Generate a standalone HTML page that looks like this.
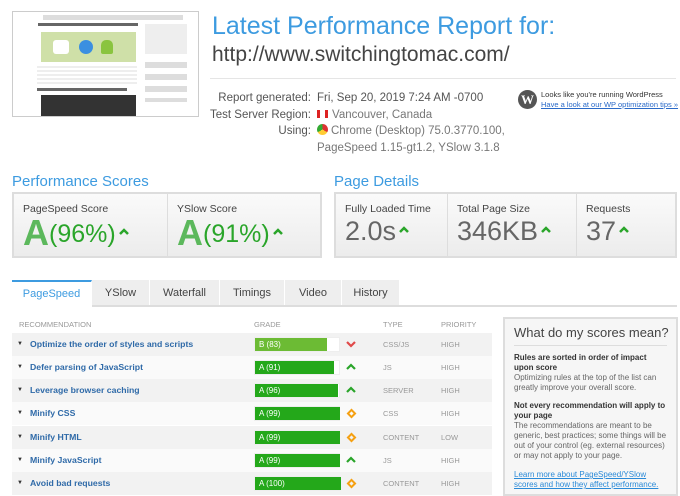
<!DOCTYPE html>
<html><head><style>
*{margin:0;padding:0;box-sizing:border-box}
body{width:680px;height:496px;overflow:hidden;background:#fff;font-family:"Liberation Sans",sans-serif;position:relative;color:#555}
.a{position:absolute}
.blue{color:#3d9be0}
.box{position:absolute;border:2px solid #ddd;background:linear-gradient(#fafafa,#ececec)}
.cell{position:absolute;top:0;bottom:0;border-right:1px solid #ddd}
.lbl{position:absolute;left:9px;top:9px;font-size:10.5px;color:#444}
.big{position:absolute;left:9px;top:22px;font-size:28px;color:#666;white-space:nowrap}
.grn{color:#2aa52a}
.up{display:inline-block;width:10px;height:8px;margin-left:3px;vertical-align:6px}
.tab{position:absolute;top:280px;height:26px;background:#eee;border-right:1px solid #fff;font-size:11px;color:#444;text-align:center;line-height:27px}
.row{position:absolute;left:12px;width:480px;height:23px;font-size:8.7px}
.row .t{position:absolute;left:18px;top:6px;color:#2f6aa8;font-weight:bold}
.row .c{position:absolute;left:5px;top:8px;font-size:6px;color:#333}
.row .bar{position:absolute;left:242px;top:4px;width:86px;height:15px;background:#fff;border:1px solid #eee}
.row .bar div{height:100%;background:#24a81a;color:#fff;font-size:8px;line-height:14px;padding-left:4px}
.row .ty{position:absolute;left:371px;top:7px;font-size:7.5px;color:#999}
.row .pr{position:absolute;left:429px;top:7px;font-size:7.5px;color:#999}
.row svg{position:absolute;left:334px;top:7px}
.dia{position:absolute;left:336px;top:8px;width:7px;height:7px;border:2px solid #f5a011;transform:rotate(45deg)}
</style></head><body>
<div class="a" style="left:12px;top:11px;width:187px;height:106px;border:1px solid #ccc;background:#fff;overflow:hidden">
 <div class="a" style="left:30px;top:3px;width:140px;height:5px;background:#ddd"></div>
 <div class="a" style="left:25px;top:11px;width:100px;height:3px;background:#666"></div>
 <div class="a" style="left:28px;top:20px;width:95px;height:30px;background:#cfe0a8"></div>
 <div class="a" style="left:40px;top:28px;width:16px;height:14px;background:#fff;border-radius:3px"></div>
 <div class="a" style="left:66px;top:28px;width:14px;height:14px;background:#3b8fe0;border-radius:50%"></div>
 <div class="a" style="left:88px;top:28px;width:12px;height:14px;background:#8ac43f;border-radius:5px 5px 2px 2px"></div>
 <div class="a" style="left:24px;top:54px;width:100px;height:18px;background:repeating-linear-gradient(#eee 0 2px,#fff 2px 4px)"></div>
 <div class="a" style="left:24px;top:76px;width:90px;height:3px;background:#666"></div>
 <div class="a" style="left:28px;top:83px;width:95px;height:25px;background:#333"></div>
 <div class="a" style="left:132px;top:12px;width:42px;height:30px;background:#eee"></div>
 <div class="a" style="left:132px;top:50px;width:42px;height:40px;background:repeating-linear-gradient(#ddd 0 6px,#fff 6px 12px)"></div>
</div>
<div class="a blue" style="left:212px;top:12px;font-size:25px;white-space:nowrap">Latest Performance Report for:</div>
<div class="a" style="left:212px;top:43px;font-size:21px;color:#444;white-space:nowrap">http://www.switchingtomac.com/</div>
<div class="a" style="left:210px;top:78px;width:466px;height:1px;background:#e5e5e5"></div>
<div class="a" style="left:200px;top:90px;width:111px;text-align:right;font-size:11.5px;line-height:16.5px;color:#555">Report generated:<br>Test Server Region:<br>Using:</div>
<div class="a" style="left:317px;top:90px;font-size:11.5px;line-height:16.5px;color:#777;white-space:nowrap"><span style="color:#555">Fri, Sep 20, 2019 7:24 AM -0700</span><br><span style="display:inline-block;width:11px;height:8px;background:linear-gradient(90deg,#d22 0 3px,#fff 3px 8px,#d22 8px);margin-right:4px"></span>Vancouver, Canada<br><span style="display:inline-block;width:11px;height:11px;border-radius:50%;background:conic-gradient(#d33 0 120deg,#fc3 120deg 240deg,#3a3 240deg);margin-right:3px;vertical-align:-1px"></span>Chrome (Desktop) 75.0.3770.100,<br>PageSpeed 1.15-gt1.2, YSlow 3.1.8</div>
<div class="a" style="left:518px;top:90px;width:19px;height:19px;border-radius:50%;background:#555;color:#fff;font:bold 13px 'Liberation Serif',serif;text-align:center;line-height:19px">W</div>
<div class="a" style="left:541px;top:90px;font-size:7.5px;color:#333;line-height:10px;white-space:nowrap">Looks like you're running WordPress<br><span style="color:#2a6ac8;text-decoration:underline">Have a look at our WP optimization tips »</span></div>

<div class="a blue" style="left:12px;top:173px;font-size:15px">Performance Scores</div>
<div class="box" style="left:12px;top:192px;width:310px;height:66px">
 <div class="cell" style="left:0;width:154px"><div class="lbl">PageSpeed Score</div><div class="big grn" style="top:18px;font-size:25px"><span style="font-size:36px;font-weight:bold;color:#5cb85c;vertical-align:-3px">A</span>(96%)<svg class="up" viewBox="0 0 10 8"><path d="M1 6L5 2L9 6" stroke="#2aa52a" stroke-width="2.5" fill="none"/></svg></div></div>
 <div class="cell" style="left:154px;width:154px;border:none"><div class="lbl">YSlow Score</div><div class="big grn" style="top:18px;font-size:25px"><span style="font-size:36px;font-weight:bold;color:#5cb85c;vertical-align:-3px">A</span>(91%)<svg class="up" viewBox="0 0 10 8"><path d="M1 6L5 2L9 6" stroke="#2aa52a" stroke-width="2.5" fill="none"/></svg></div></div>
</div>
<div class="a blue" style="left:334px;top:173px;font-size:15px">Page Details</div>
<div class="box" style="left:334px;top:192px;width:343px;height:66px">
 <div class="cell" style="left:0;width:112px"><div class="lbl">Fully Loaded Time</div><div class="big" style="top:22px;font-size:27px">2.0s<svg class="up" viewBox="0 0 10 8"><path d="M1 6L5 2L9 6" stroke="#2aa52a" stroke-width="2.5" fill="none"/></svg></div></div>
 <div class="cell" style="left:112px;width:129px"><div class="lbl">Total Page Size</div><div class="big" style="top:22px;font-size:27px">346KB<svg class="up" viewBox="0 0 10 8"><path d="M1 6L5 2L9 6" stroke="#2aa52a" stroke-width="2.5" fill="none"/></svg></div></div>
 <div class="cell" style="left:241px;width:98px;border:none"><div class="lbl">Requests</div><div class="big" style="top:22px;font-size:27px">37<svg class="up" viewBox="0 0 10 8"><path d="M1 6L5 2L9 6" stroke="#2aa52a" stroke-width="2.5" fill="none"/></svg></div></div>
</div>

<div class="tab" style="left:12px;width:80px;background:#fff;border-top:2px solid #3d9be0;color:#3d9be0;line-height:25px">PageSpeed</div>
<div class="tab" style="left:92px;width:58px">YSlow</div>
<div class="tab" style="left:150px;width:70px">Waterfall</div>
<div class="tab" style="left:220px;width:65px">Timings</div>
<div class="tab" style="left:285px;width:57px">Video</div>
<div class="tab" style="left:342px;width:58px">History</div>
<div class="a" style="left:92px;top:305px;width:585px;height:2px;background:#ddd"></div>

<div class="a" style="left:19px;top:320px;font-size:7.5px;color:#999">RECOMMENDATION</div>
<div class="a" style="left:254px;top:320px;font-size:7.5px;color:#999">GRADE</div>
<div class="a" style="left:383px;top:320px;font-size:7.5px;color:#999">TYPE</div>
<div class="a" style="left:441px;top:320px;font-size:7.5px;color:#999">PRIORITY</div>

<div class="row" style="top:333px;background:#f2f2f2"><span class="c">▼</span><span class="t">Optimize the order of styles and scripts</span><div class="bar"><div style="width:72px;background:#6cbb34">B (83)</div></div><svg width="10" height="8" viewBox="0 0 10 8"><path d="M1 2L5 6L9 2" stroke="#e04a4a" stroke-width="2.2" fill="none"/></svg><span class="ty">CSS/JS</span><span class="pr">HIGH</span></div>
<div class="row" style="top:356px;background:#fafafa"><span class="c">▼</span><span class="t">Defer parsing of JavaScript</span><div class="bar"><div style="width:79px">A (91)</div></div><svg width="10" height="8" viewBox="0 0 10 8"><path d="M1 6L5 2L9 6" stroke="#2aa52a" stroke-width="2.2" fill="none"/></svg><span class="ty">JS</span><span class="pr">HIGH</span></div>
<div class="row" style="top:379px;background:#f2f2f2"><span class="c">▼</span><span class="t">Leverage browser caching</span><div class="bar"><div style="width:83px">A (96)</div></div><svg width="10" height="8" viewBox="0 0 10 8"><path d="M1 6L5 2L9 6" stroke="#2aa52a" stroke-width="2.2" fill="none"/></svg><span class="ty">SERVER</span><span class="pr">HIGH</span></div>
<div class="row" style="top:402px;background:#fafafa"><span class="c">▼</span><span class="t">Minify CSS</span><div class="bar"><div style="width:85px">A (99)</div></div><span class="dia"></span><span class="ty">CSS</span><span class="pr">HIGH</span></div>
<div class="row" style="top:426px;background:#f2f2f2"><span class="c">▼</span><span class="t">Minify HTML</span><div class="bar"><div style="width:85px">A (99)</div></div><span class="dia"></span><span class="ty">CONTENT</span><span class="pr">LOW</span></div>
<div class="row" style="top:449px;background:#fafafa"><span class="c">▼</span><span class="t">Minify JavaScript</span><div class="bar"><div style="width:85px">A (99)</div></div><svg width="10" height="8" viewBox="0 0 10 8"><path d="M1 6L5 2L9 6" stroke="#2aa52a" stroke-width="2.2" fill="none"/></svg><span class="ty">JS</span><span class="pr">HIGH</span></div>
<div class="row" style="top:472px;background:#f2f2f2"><span class="c">▼</span><span class="t">Avoid bad requests</span><div class="bar"><div style="width:86px">A (100)</div></div><span class="dia"></span><span class="ty">CONTENT</span><span class="pr">HIGH</span></div>

<div class="a" style="left:503px;top:317px;width:175px;height:179px;border:2px solid #ddd;background:#f6f6f6;padding:6px 9px">
 <div style="font-size:13px;color:#444;padding-bottom:5px;border-bottom:1px solid #ddd;white-space:nowrap">What do my scores mean?</div>
 <div style="font-size:8px;line-height:10px;color:#666;margin-top:7px"><b style="color:#333">Rules are sorted in order of impact upon score</b><br>Optimizing rules at the top of the list can greatly improve your overall score.</div>
 <div style="font-size:8px;line-height:10px;color:#666;margin-top:8px"><b style="color:#333">Not every recommendation will apply to your page</b><br>The recommendations are meant to be generic, best practices; some things will be out of your control (eg. external resources) or may not apply to your page.</div>
 <div style="font-size:8px;line-height:10px;color:#2a8ad8;text-decoration:underline;margin-top:9px">Learn more about PageSpeed/YSlow scores and how they affect performance.</div>
</div>
</body></html>
